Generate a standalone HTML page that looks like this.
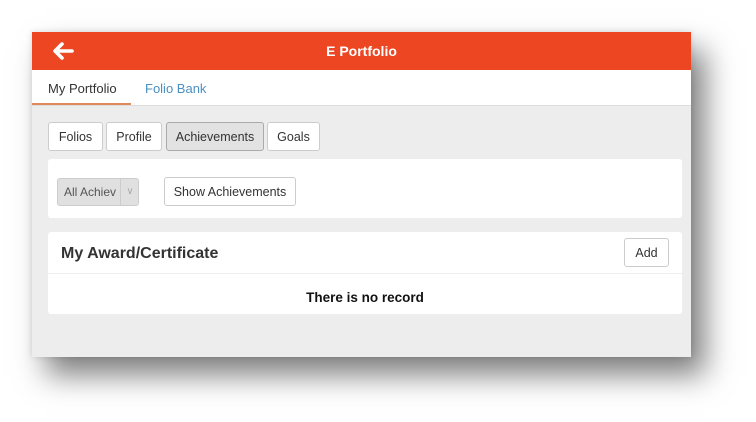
<!DOCTYPE html>
<html><head><style>
*{margin:0;padding:0;box-sizing:border-box}
body{width:756px;height:422px;background:#fff;font-family:"Liberation Sans",sans-serif;position:relative;overflow:hidden}
.scr{position:absolute;left:32px;top:32px;width:659px;height:325px;background:#ededed;box-shadow:14px 18px 28px rgba(0,0,0,.5),0 0 6px rgba(0,0,0,.12)}
.hdr{height:38px;background:#ec4622;color:#fff;text-align:center;font-weight:bold;font-size:14px;line-height:38px;position:relative}
.tabs{height:36px;background:#fff;border-bottom:1px solid #ddd;position:relative;font-size:13px}
.t{position:absolute;top:11px}
.ul{position:absolute;left:0;top:33px;width:99px;height:2px;background:#e08a5a}
.btn{position:absolute;top:90px;height:29px;border:1px solid #ccc;border-radius:3px;background:#fff;font-size:12.5px;line-height:29px;text-align:center;color:#333}
.card{position:absolute;left:16px;width:634px;background:#fff;border-radius:3px}
</style></head><body>
<div class="scr">
<div class="hdr">E Portfolio
<svg style="position:absolute;left:20px;top:10px" width="22" height="18" viewBox="0 0 22 18"><path d="M20 9H4M10 2L3 9l7 7" stroke="#fff" stroke-width="3.6" fill="none" stroke-linecap="round" stroke-linejoin="round"/></svg></div>
<div class="tabs"><span class="t" style="left:16px;color:#333">My Portfolio</span><span class="t" style="left:113px;color:#4a90c0">Folio Bank</span><div class="ul"></div></div>
<div class="btn" style="left:16px;width:55px">Folios</div>
<div class="btn" style="left:74px;width:56px">Profile</div>
<div class="btn" style="left:134px;width:98px;background:#e2e2e2;border-color:#aaa">Achievements</div>
<div class="btn" style="left:235px;width:53px">Goals</div>
<div class="card" style="top:127px;height:59px">
<div style="position:absolute;left:9px;top:19px;width:82px;height:28px;background:#e0e0e0;border:1px solid #ccc;border-radius:3px;font-size:12px;color:#555;line-height:26px;padding-left:6px;overflow:hidden">All Achiev<span style="position:absolute;left:62px;top:0;width:19px;height:26px;border-left:1px solid #ccc;color:#aaa;font-size:10px;text-align:center">∨</span></div>
<div style="position:absolute;left:116px;top:18px;width:132px;height:29px;border:1px solid #ccc;border-radius:3px;font-size:12.5px;line-height:29px;text-align:center;color:#333">Show Achievements</div>
</div>
<div class="card" style="top:200px;height:82px">
<div style="position:absolute;left:13px;top:13px;font-size:16px;font-weight:bold;color:#333">My Award/Certificate</div>
<div style="position:absolute;right:13px;top:6px;width:45px;height:29px;border:1px solid #ccc;border-radius:3px;font-size:12.5px;line-height:29px;text-align:center;color:#333">Add</div>
<div style="position:absolute;left:0;right:0;top:41px;border-top:1px solid #eee"></div>
<div style="position:absolute;left:0;right:0;top:58px;text-align:center;font-size:13.5px;font-weight:bold;color:#111">There is no record</div>
</div>
</div>
</body></html>
